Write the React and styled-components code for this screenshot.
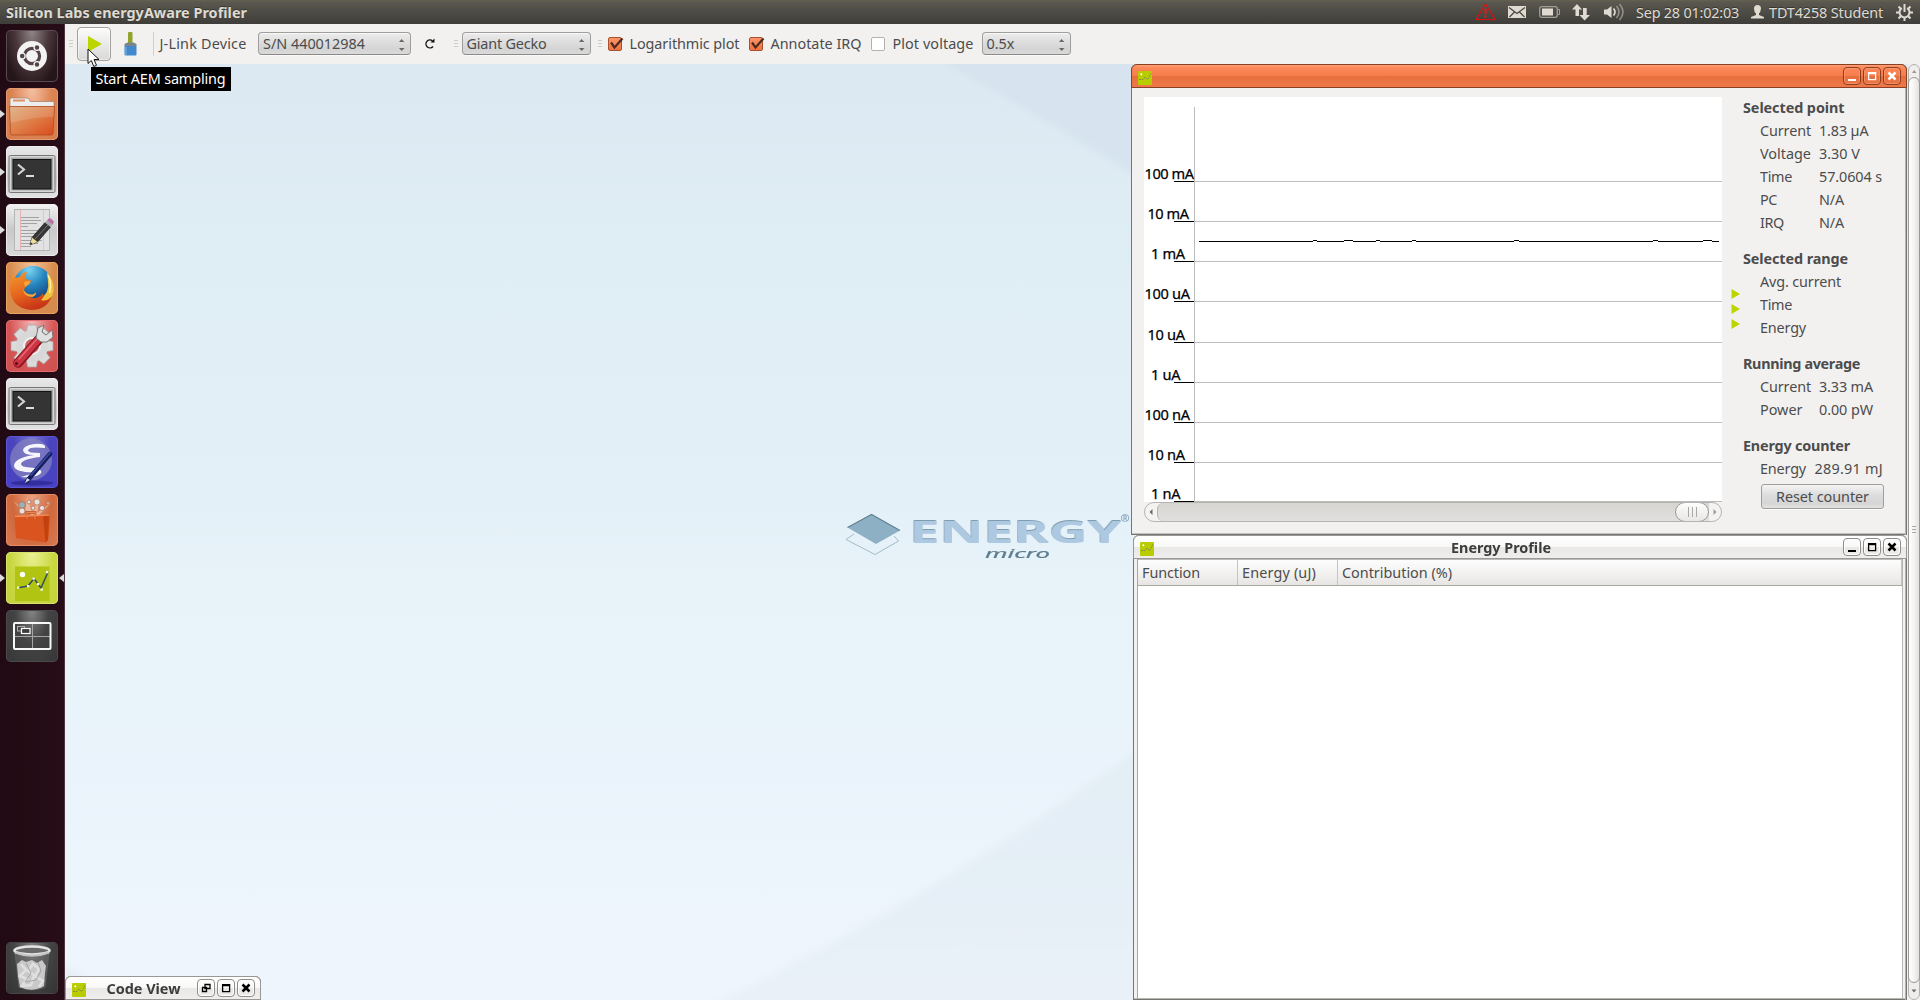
import React, { useLayoutEffect, useRef, useState } from "react";
import styled, { createGlobalStyle, css } from "styled-components";

const Global = createGlobalStyle`
  * { box-sizing: border-box; }
  html, body { margin: 0; padding: 0; overflow: hidden; }
  body { font-family: "Noto Sans", "Open Sans", sans-serif; font-size: 14.4px; color: #4c4c4c; }
  svg { display: block; flex: none; }
`;

/* ---------- text ---------- */

const TextSpan = styled.span`
  display: block;
  flex: none;
  white-space: pre;
  width: ${(p) => p.$w}px;
  margin-left: ${(p) => p.$gap || 0}px;
  line-height: 23px;
  font-weight: ${(p) => (p.$bold ? 700 : 400)};
  color: ${(p) => p.$color || "inherit"};
`;

function Text({ w, children, ...rest }) {
  const ref = useRef(null);
  const [spacing, setSpacing] = useState(0);
  useLayoutEffect(() => {
    const range = document.createRange();
    range.selectNodeContents(ref.current);
    const natural = range.getBoundingClientRect().width;
    setSpacing((w - natural) / children.length);
  }, []);
  return (
    <TextSpan $w={w} {...rest}>
      <span ref={ref} style={{ letterSpacing: spacing }}>{children}</span>
    </TextSpan>
  );
}

/* ---------- shell ---------- */

const Screen = styled.div`
  width: 1920px;
  height: 1000px;
  display: flex;
  flex-direction: column;
  overflow: hidden;
  background: #f2f1f0;
`;
const TopBar = styled.header`
  height: 24px;
  flex: none;
  display: flex;
  align-items: center;
  padding-left: 6px;
  color: #dfdbd2;
  background: linear-gradient(#656250 0, #5a584f 2px, #3e3d39 100%);
  text-shadow: 0 -1px 0 rgba(0, 0, 0, 0.35);
`;
const Indicators = styled.div`
  display: flex;
  align-items: center;
  height: 24px;
  margin-left: auto;
  padding-right: 7px;
`;
const Slot = styled.div`
  margin-left: ${(p) => p.$gap || 0}px;
  flex: none;
`;
const Main = styled.div`
  flex: 1;
  min-height: 0;
  display: flex;
`;
const Launcher = styled.nav`
  width: 65px;
  flex: none;
  display: flex;
  flex-direction: column;
  gap: 6px;
  padding: 6px 0 6px 6px;
  background: linear-gradient(90deg, #210a13, #270d17);
  border-right: 1px solid #4b3641;
`;
const LaunchItem = styled.div`
  position: relative;
  width: 52px;
  height: 52px;
  flex: none;
  margin-top: ${(p) => (p.$last ? "auto" : 0)};
  ${(p) => p.$running && css`
    &::before {
      content: "";
      position: absolute;
      left: -6px;
      top: 22px;
      border: 4px solid transparent;
      border-left: 5px solid #dcdcdc;
      border-right: 0;
    }
  `}
  ${(p) => p.$active && css`
    &::after {
      content: "";
      position: absolute;
      left: 53px;
      top: 22px;
      border: 4px solid transparent;
      border-right: 5px solid #dcdcdc;
      border-left: 0;
    }
  `}
`;
const Tile = styled.div`
  width: 52px;
  height: 52px;
  border-radius: 5px;
  overflow: hidden;
  background: ${(p) => p.$bg};
  box-shadow: inset 0 0 0 1px ${(p) => p.$edge || "rgba(255,255,255,0.3)"};
`;

/* ---------- toolbar ---------- */

const Content = styled.div`
  flex: 1;
  min-width: 0;
  display: flex;
  flex-direction: column;
`;
const Toolbar = styled.div`
  position: relative;
  z-index: 2;
  height: 40px;
  flex: none;
  display: flex;
  align-items: center;
  padding: 0 0 1px 4px;
  background: #f2f1f0;
`;
const Grip = styled.div`
  width: 4px;
  height: 8px;
  flex: none;
  margin-left: ${(p) => p.$gap || 0}px;
  background: repeating-linear-gradient(#cfcdca 0 1px, transparent 1px 3px);
`;
const PlayButton = styled.button`
  width: 34px;
  height: 34px;
  flex: none;
  margin: 0 0 0 4px;
  padding: 0;
  border: 1px solid #a2a19f;
  border-radius: 4px;
  background: linear-gradient(#fbfbfb, #d8d8d7);
  box-shadow: inset 0 0 0 1px rgba(255, 255, 255, 0.5);
`;
const Separator = styled.div`
  width: 1px;
  height: 24px;
  margin-left: 16px;
  background: #d2d0cd;
`;
const Select = styled.div`
  width: ${(p) => p.$w}px;
  height: 23px;
  flex: none;
  margin-left: ${(p) => p.$gap}px;
  padding: 0 4px 0 4px;
  display: flex;
  align-items: center;
  justify-content: space-between;
  border: 1px solid #a09e9b;
  border-bottom-color: #8c8a87;
  border-radius: 4px;
  background: linear-gradient(#ececec, #d4d4d4 75%, #dadada);
  box-shadow: inset 0 1px 0 #f8f8f8, 0 1px 0 #fafafa;
`;
const Check = styled.div`
  width: 14px;
  height: 14px;
  flex: none;
  position: relative;
  margin-left: ${(p) => p.$gap}px;
  border-radius: 2px;
  border: 1px solid ${(p) => (p.$on ? "#a9502c" : "#b4b2af")};
  background: ${(p) => (p.$on ? "linear-gradient(#fb9468, #ee7241)" : "#fff")};
  svg { position: absolute; left: -1px; top: -1px; overflow: visible; }
`;
const Tooltip = styled.div`
  position: absolute;
  left: 26px;
  top: 43px;
  width: 140px;
  height: 24px;
  padding-left: 4.5px;
  background: #000;
  color: #fff;
`;
const Pointer = styled.div`
  position: absolute;
  left: 22px;
  top: 24px;
`;

/* ---------- MDI area ---------- */

const Area = styled.div`
  flex: 1;
  min-height: 0;
  display: flex;
`;
const Workspace = styled.div`
  position: relative;
  flex: 1;
  overflow: hidden;
  background: linear-gradient(#dde9f2 0, #dfedf5 20%, #e3eff7 42%, #e7f3f9 55%, #eaf3fb 75%, #eef5fd 100%);
`;
const Backdrop = styled.svg`
  position: absolute;
  left: 0;
  top: 0;
`;
const Win = styled.section`
  position: absolute;
  left: ${(p) => p.$x}px;
  top: ${(p) => p.$y}px;
  width: ${(p) => p.$w}px;
  height: ${(p) => p.$h}px;
  display: flex;
  flex-direction: column;
  background: #f2f1f0;
  border-radius: 6px 6px 0 0;
  box-shadow: inset 1px 0 #777572, inset -1px 0 #777572, inset -2px 0 #b5b3b0, inset 0 -1px #777572, inset 0 -2px #c4c2bf;
`;
const TitleBar = styled.div`
  height: ${(p) => p.$h}px;
  flex: none;
  display: flex;
  align-items: center;
  justify-content: space-between;
  padding: 0 5px 0 6px;
  border-radius: 6px 6px 0 0;
  border: 1px solid ${(p) => (p.$active ? "#8a4023" : "#9a9896")};
  color: #3c3c3c;
  background: ${(p) => p.$active
    ? "linear-gradient(#ff9e76 0, #fd8757 3px, #f77d4c 48%, #e66f3e 52%, #f07848 100%)"
    : "linear-gradient(#ffffff 0, #f8f8f7 48%, #e9e8e7 52%, #efeeed 100%)"};
`;
const TitleIcon = styled.div`
  flex: none;
  margin-top: 4px;
`;
const WinButtons = styled.div`
  display: flex;
  gap: 2px;
`;
const WinButton = styled.div`
  width: 18px;
  height: 18px;
  border-radius: 4px;
  border: 1px solid ${(p) => (p.$active ? "#8a4023" : "#8f8d8b")};
  box-shadow: inset 0 0 0 1px ${(p) => (p.$active ? "rgba(255,170,130,.45)" : "#fff")};
  color: ${(p) => (p.$active ? "#fff" : "#000")};
`;
const Body = styled.div`
  flex: 1;
  display: flex;
  padding: 8px 0 0 13px;
`;
const ChartColumn = styled.div`
  width: 578px;
  flex: none;
  padding-top: 1px;
`;
const HScroll = styled.div`
  display: flex;
  width: 578px;
  height: 20px;
  border-radius: 10px;
  border: 1px solid #b5b3b0;
  background: #f4f3f2;
  overflow: hidden;
`;
const ScrollEnd = styled.div`
  width: 12px;
  flex: none;
  display: flex;
  align-items: center;
  justify-content: center;
`;
const HTrack = styled.div`
  flex: 1;
  display: flex;
  justify-content: flex-end;
  border-left: 1px solid #b5b3b0;
  border-radius: 6px 0 0 6px;
  background: linear-gradient(#d6d5d2, #e1e0de);
`;
const HThumb = styled.div`
  width: 34px;
  height: 20px;
  margin-top: -1px;
  display: flex;
  align-items: center;
  justify-content: center;
  border: 1px solid #9b9996;
  border-radius: 10px;
  background: linear-gradient(#fdfdfd, #e8e7e6);
`;
const Ribs = styled.div`
  width: 9px;
  height: 10px;
  background: repeating-linear-gradient(90deg, #aaa8a5 0 1px, transparent 1px 4px);
`;
const Markers = styled.div`
  width: 21px;
  flex: none;
  display: flex;
  flex-direction: column;
  gap: 5px;
  padding: 193px 0 0 9px;
`;
const Readout = styled.div`
  display: flex;
  flex-direction: column;
  gap: 13px;
`;
const Group = styled.div`
  display: flex;
  flex-direction: column;
`;
const Row = styled.div`
  display: flex;
  height: 23px;
  padding-left: 17px;
`;
const ResetButton = styled.button`
  width: 123px;
  height: 25px;
  margin: 4px 0 0 18px;
  padding: 0 0 1px 14px;
  display: flex;
  align-items: center;
  font: inherit;
  color: #4c4c4c;
  border: 1px solid #a09e9b;
  border-radius: 3px;
  background: linear-gradient(#f4f4f4, #dcdcdc 45%, #d6d6d6 80%, #e2e2e2);
  box-shadow: 0 1px 0 #fbfbfb;
`;
const TableFrame = styled.div`
  flex: 1;
  margin: 0 4px 1px 4px;
  border-left: 1px solid #a9a7a3;
  border-right: 1px solid #b8b6b2;
  border-bottom: 1px solid #b8b6b2;
  background: #fff;
`;
const HeaderRow = styled.div`
  display: flex;
  height: 27px;
  align-items: center;
  border-top: 1px solid #bdbbb7;
  border-bottom: 1px solid #aaa8a2;
  background: linear-gradient(#fdfdfd, #f1f0ef 60%, #e6e5e4);
`;
const HeaderCell = styled.div`
  width: ${(p) => p.$w}px;
  height: 25px;
  padding-left: 4px;
  display: flex;
  align-items: center;
  border-right: 1px solid #c6c4c1;
`;
const VScroll = styled.div`
  width: 12px;
  flex: none;
  display: flex;
  flex-direction: column;
  border: 1px solid #b3b1ae;
  border-radius: 7px;
  background: #efeeed;
`;
const VEnd = styled.div`
  height: ${(p) => p.$h}px;
  flex: none;
  display: flex;
  align-items: center;
  justify-content: center;
`;
const VThumb = styled.div`
  flex: 1;
  width: 12px;
  margin-left: -1px;
  display: flex;
  align-items: center;
  justify-content: center;
  border: 1px solid #9b9996;
  border-radius: 7px;
  background: linear-gradient(90deg, #fff, #f5f4f3 50%, #e2e1e0);
`;
const VRibs = styled.div`
  width: 4px;
  height: 8px;
  background: repeating-linear-gradient(#aaa8a5 0 1px, transparent 1px 3px);
`;

/* ---------- drawings ---------- */

const Arrow = ({ d, w = 6, h = 4, fill = "#6b6967" }) => (
  <svg width={w} height={h} viewBox={`0 0 ${w} ${h}`}><path d={d} fill={fill} /></svg>
);
const SpinArrows = () => (
  <svg width="9" height="15" viewBox="0 0 9 15">
    <path d="M2 6 4.5 3 7.5 6ZM2 12 7.5 12 4.7 15Z" fill="#6b6967" />
  </svg>
);
const CheckMark = () => (
  <svg width="16" height="14" viewBox="0 0 16 14">
    <path d="M3 5.5 6.5 10.5 14.5 1.5" fill="none" stroke="#4d2a1d" strokeWidth="2.2" />
  </svg>
);
const AppGlyph = () => (
  <TitleIcon>
    <svg width="14" height="14" viewBox="0 0 14 14">
      <rect width="14" height="14" rx="1" fill="#b9cc00" />
      <circle cx="3.3" cy="3.2" r="1" fill="#fff" />
      <path d="M1 8.500H5L7 6 9.500 8.500 10.500 7 13 2.500" fill="none" stroke="#7b8a4c" strokeWidth="1" strokeDasharray="1.800 .9" />
    </svg>
  </TitleIcon>
);
const glyphs = {
  min: <path d="M4 11h8v2H4z" fill="currentColor" />,
  max: <path d="M4.600 4.600h7v7h-7z M4 5.500h8" fill="none" stroke="currentColor" strokeWidth="1.3" />,
  close: <path d="M4.500 4.500 11.500 11.500M11.500 4.500 4.500 11.500" fill="none" stroke="currentColor" strokeWidth="2.500" />,
  restore: <path d="M7 4.5h5v4h-5zM4.5 7.5h4v4h-4z" fill="none" stroke="currentColor" strokeWidth="1.3" />,
};
const Buttons = ({ kinds, active }) => (
  <WinButtons>
    {kinds.map((k) => (
      <WinButton key={k} $active={active}>
        <svg width="16" height="16" viewBox="0 0 16 16">{glyphs[k]}</svg>
      </WinButton>
    ))}
  </WinButtons>
);

const Icon52 = ({ children }) => <svg width="52" height="52" viewBox="0 0 52 52">{children}</svg>;

const DashIcon = () => (
  <Icon52>
    <circle cx="26" cy="26" r="15" fill="#f4f3f3" />
    <circle cx="26" cy="26" r="7.6" fill="none" stroke="#544448" strokeWidth="3.2" />
    <g fill="#544448" stroke="#f4f3f3" strokeWidth="1.3">
      <circle cx="16.2" cy="26" r="2.9" />
      <circle cx="31" cy="17.4" r="2.9" />
      <circle cx="31" cy="34.6" r="2.9" />
    </g>
  </Icon52>
);
const FolderIcon = () => (
  <Icon52>
    <defs>
      <linearGradient id="fold" x1="0" y1="0" x2="1" y2="1">
        <stop offset="0" stopColor="#d9a878" /><stop offset=".5" stopColor="#df7e48" /><stop offset="1" stopColor="#d94a1c" />
      </linearGradient>
    </defs>
    <path d="M4 18V11.5q0-1.5 1.500-1.500H21q2 0 2.500 2l.8 1.500H47q1 0 1 1V19H4Z" fill="#ededed" stroke="#a9836e" strokeWidth=".8" />
    <path d="M7 12.500h12" stroke="#e09068" strokeWidth="2" />
    <path d="M3.500 18.500h45L47 45.500q0 1.500-1.500 1.500H6q-1.500 0-1.500-1.500Z" fill="url(#fold)" stroke="#b24a20" strokeWidth=".8" />
    <path d="M4 19h44l-.5 10Q30 28 4.500 35Z" fill="#fff" opacity=".14" />
  </Icon52>
);
const TerminalIcon = () => (
  <Icon52>
    <rect x="3" y="9.500" width="46" height="37" rx="1.500" fill="#d6d6d6" stroke="#777" />
    <rect x="5" y="11.500" width="42" height="33" fill="#a8a8a8" />
    <rect x="7" y="13.500" width="38" height="29.500" fill="#343434" stroke="#141414" />
    <path d="M12 18.500 18 23.500 12 28.500" fill="none" stroke="#d2d2d2" strokeWidth="2.200" />
    <path d="M20 30h8" stroke="#dedede" strokeWidth="2" />
  </Icon52>
);
const EditorIcon = () => (
  <Icon52>
    <rect x="8.500" y="5.500" width="35" height="41" fill="#e2e2e2" stroke="#b5b5b5" />
    <path d="M14.500 6v40" stroke="#e4b4b4" /><path d="M37.500 6v40" stroke="#c4cee2" />
    <path d="M15 13.500h18M15 16.500h20M15 19.500h16M15 22.500h7M15 26.500h19M15 29.500h18M15 32.500h13M15 36.500h21M15 39.500h17M15 42.500h10" stroke="#a2a2a2" strokeWidth="1" />
    <path d="M24 41 26 33.500 39 18.500 44.500 23 31.500 38Z" fill="#363636" stroke="#1e1e1e" strokeWidth=".7" />
    <path d="M24 41 26 33.500 31.500 38Z" fill="#e9dd9c" /><path d="M24 41 24.700 38.300 26.500 39.800Z" fill="#222" />
    <path d="M29 35 42 21" stroke="#777" strokeWidth="1" />
    <path d="M39 18.500 41 16.200 46.500 20.700 44.500 23Z" fill="#aaa" />
    <path d="M41 16.200 43 14.200q3 0 5 3.800L46.500 20.700Z" fill="#bc6fab" />
  </Icon52>
);
const FirefoxIcon = () => (
  <Icon52>
    <defs>
      <radialGradient id="globe" cx=".4" cy=".1" r=".9">
        <stop offset="0" stopColor="#7cd4f2" /><stop offset=".45" stopColor="#2586bf" /><stop offset="1" stopColor="#15306d" />
      </radialGradient>
      <linearGradient id="fox" x1="0" y1="0" x2=".4" y2="1">
        <stop offset="0" stopColor="#f49a2c" /><stop offset=".6" stopColor="#e4641d" /><stop offset="1" stopColor="#c93718" />
      </linearGradient>
    </defs>
    <circle cx="27" cy="23.500" r="19.500" fill="url(#globe)" />
    <path d="M41 10Q48.500 18 47.500 29Q46 40 36 45L33 38Q44 31 42 20Z" fill="#f2c23c" />
    <path d="M42 13Q46 20 43.500 31" fill="none" stroke="#fff2b0" strokeWidth="1.500" />
    <path d="M7 12Q4 18 4 27Q5 46 25 48Q41 48 46 34Q41 40 35 38Q39 35 37 31Q33 37 27 36Q19 34 18 28Q19 24 24 22L25 18Q22 19 20 17Q19 13 21 10Q16 10 14 15L9 16Z" fill="url(#fox)" />
    <path d="M17 27Q20 33 27 32.500L29.500 30.500Q31 33 26.500 35Q18 35 17 27ZM18 20l6-1-1 3-4 3Z" fill="#f6a83c" />
  </Icon52>
);
const teeth = Array.from({ length: 8 }, (_, i) => i * 45);
const SettingsIcon = () => (
  <Icon52>
    <g fill="#dcdcdc" stroke="#a7a7a7" strokeWidth=".8">
      {teeth.map((a) => (
        <path key={a} d="M20.500 12 21.500 5h9l1 7Z" transform={`rotate(${a} 26 26)`} />
      ))}
    </g>
    <circle cx="26" cy="26" r="16" fill="#d8d8d8" />
    <circle cx="26" cy="26" r="8" fill="#c86464" stroke="#f1f1f1" strokeWidth="2" />
    <path d="M12 43 35 17" stroke="#8e1520" strokeWidth="9.500" strokeLinecap="round" />
    <path d="M11.500 43 34.500 17" stroke="#cb3442" strokeWidth="7" strokeLinecap="round" />
    <path d="M13 39 31 19" stroke="#e46a72" strokeWidth="1.500" strokeLinecap="round" />
    <circle cx="10.500" cy="43.500" r="1.500" fill="#5e0c14" />
    <path d="M30 18 32 8 38 5 36 12 40 15 46 10 47 17 41 22 35 22Z" fill="#dfe1e1" stroke="#787878" strokeWidth="1" />
  </Icon52>
);
const EmacsIcon = () => (
  <Icon52>
    <circle cx="25" cy="23.500" r="21" fill="#8280c0" opacity=".75" />
    <ellipse cx="26" cy="47" rx="21" ry="2.500" fill="#2a2590" opacity=".7" />
    <path d="M39 10Q37 7 28 8Q17 9.500 17 14.500Q18 19 28 19Q8 22 8 30Q9 36 27 36.500Q24 38.500 15 41Q34 42 35.500 36Q35 32 24 31.500Q15 31 15 28Q16 23 34 21V17Q22 17 22 14.500Q22.500 10 39 12Z" fill="#f5f5fb" />
    <path d="M21 45 44 18" stroke="#161d5b" strokeWidth="4.500" strokeLinecap="round" />
    <path d="M25 39 44 17" stroke="#3949a0" strokeWidth="1.800" strokeLinecap="round" />
    <path d="M19 47 21 42 24 44Z" fill="#d8d8e8" />
  </Icon52>
);
const StoreIcon = () => (
  <Icon52>
    <path d="M26 21 7 7 19 19 21 3 26 18 34 3 31 19 46 8 32 22Z" fill="#f7d4c0" opacity=".6" />
    <g fill="#e7e2df" stroke="#ac7358" strokeWidth=".8">
      <circle cx="16" cy="11" r="3.300" fill="#9bb0bb" /><circle cx="23" cy="8" r="2" /><circle cx="31" cy="8" r="3.200" />
      <circle cx="16" cy="17" r="3" /><circle cx="36" cy="14" r="2.600" /><circle cx="42" cy="9" r="1.300" /><circle cx="27" cy="14" r="2" />
    </g>
    <path d="M8.500 22.500 43 20.500 44 24 42 46 39.500 48.500 10 44Z" fill="#d9541e" />
    <path d="M37 21 43 20.500 42 46 39.500 48.500Z" fill="#c1410f" />
    <path d="M21 25v-6.500h8V25" fill="none" stroke="#b8481a" strokeWidth="2.600" />
    <path d="M21 25v-6.500h8V25" fill="none" stroke="#ee8650" strokeWidth="1.200" />
    <path d="M9 22.500 43 21" stroke="#f18b57" strokeWidth="1.300" />
  </Icon52>
);
const ProfilerIcon = () => (
  <Icon52>
    <rect x="9" y="14.500" width="34.500" height="34.500" fill="#b1c411" />
    <circle cx="16.500" cy="22.500" r="2.700" fill="#fafaf0" />
    <path d="M11 36 22 34 28 26.500 35 36 42 20" fill="none" stroke="#34505c" strokeWidth="1.600" />
    {[[12, 35.500], [22, 34], [27.500, 26.500], [32, 32], [35.500, 37.500], [41, 20]].map(([x, y]) => (
      <rect key={x} x={x - 1} y={y - 1} width="2.300" height="2.300" fill="#f6f6f6" />
    ))}
  </Icon52>
);
const SwitcherIcon = () => (
  <Icon52>
    <path d="M26.500 13v25M8 26.500h36" stroke="#a5a5a5" />
    <rect x="8" y="13" width="36.500" height="26" rx="1" fill="none" stroke="#f7f7f7" strokeWidth="2" />
    <rect x="11.500" y="16.500" width="7" height="4.500" fill="none" stroke="#b0b0b0" />
    <rect x="15.500" y="18.500" width="8.500" height="5" fill="#3c3c3c" stroke="#fff" strokeWidth="1.200" />
  </Icon52>
);
const TrashIcon = () => (
  <Icon52>
    <path d="M9 10 13 45q13 6 26 0L43 10Z" fill="#8d8d8d" opacity=".28" stroke="#c6c6c6" strokeWidth=".8" />
    <path d="M11 22 16 18 20 20 26 18 31 21 36 18 40 24 39 31 38 44Q26 51 14 45L12 34Z" fill="#c9c9c9" />
    <path d="M15 22 20 28 14 34 21 37 16 44 25 43 28 33 22 29 27 22 33 27 29 34 37 39 33 45" fill="none" stroke="#eee" strokeWidth="2.600" opacity=".6" />
    <path d="M20 21 25 31 19 40 30 38 35 29 32 20" fill="none" stroke="#a5a5a5" strokeWidth="1" />
    <ellipse cx="26" cy="8.500" rx="17.500" ry="4" fill="#6a6a6a" stroke="#e4e4e4" strokeWidth="2.600" />
    <path d="M9 10.500Q26 17 43 10.500" fill="none" stroke="#c4c4c4" strokeWidth="2" />
  </Icon52>
);

const launchers = [
  { icon: DashIcon, bg: "radial-gradient(ellipse at 50% 0%, #91878a 0%, #4a373c 45%, #25161a 80%)", edge: "#584a4d" },
  { icon: FolderIcon, bg: "radial-gradient(ellipse at 50% 0%, #f5c2a4 0%, #dc8352 55%, #d67c4c 100%)", edge: "#e49a72", running: true },
  { icon: TerminalIcon, bg: "linear-gradient(#e9e9e9, #c8c8c8 60%, #e3e3e3)", edge: "#ececec", running: true },
  { icon: EditorIcon, bg: "linear-gradient(#f3f3f3, #c9c9c9 50%, #d9d9d9)", edge: "#ececec", running: true },
  { icon: FirefoxIcon, bg: "radial-gradient(ellipse at 50% 0%, #f2c29c 0%, #d98c4c 60%, #d18a4e 100%)", edge: "#eba362" },
  { icon: SettingsIcon, bg: "radial-gradient(ellipse at 50% 0%, #f4b5b5 0%, #d65656 60%, #cd4f4f 100%)", edge: "#e36a6e" },
  { icon: TerminalIcon, bg: "linear-gradient(#e9e9e9, #c8c8c8 60%, #e3e3e3)", edge: "#ececec" },
  { icon: EmacsIcon, bg: "radial-gradient(ellipse at 50% 0%, #7b79d4 0%, #4a44bd 50%, #4842c4 100%)", edge: "#5b56d4" },
  { icon: StoreIcon, bg: "radial-gradient(ellipse at 50% 0%, #eba283 0%, #d0683d 55%, #d77a52 100%)", edge: "#e28b66" },
  { icon: ProfilerIcon, bg: "radial-gradient(ellipse at 50% 0%, #edf296 0%, #c8d63f 60%, #c4d33c 100%)", edge: "#d7e368", running: true, active: true },
  { icon: SwitcherIcon, bg: "radial-gradient(ellipse at 50% 0%, #858585 0%, #444 45%, #363636 100%)", edge: "#4a4a4a" },
  { icon: TrashIcon, bg: "radial-gradient(ellipse at 50% 0%, #808080 0%, #444 50%, #333 100%)", edge: "#444", last: true },
];

/* ---------- chart ---------- */

const scale = [
  ["100 mA", 84, 0.5, 49.5], ["10 mA", 124, 3.5, 41.5], ["1 mA", 164, 7, 34], ["100 uA", 204, 0.5, 45.5], ["10 uA", 245, 3.5, 37.5],
  ["1 uA", 285, 7, 29.5], ["100 nA", 325, 0.5, 45.5], ["10 nA", 365, 3.5, 37.5], ["1 nA", 404, 7, 29.5],
];
const bumps = [[169, 173], [200, 209], [232, 236], [268, 272], [370, 375], [509, 514], [559, 568]];
const trace = () => {
  let d = "M55 144.5";
  bumps.forEach(([a, b]) => { d += `H${a}M${a} 143.5H${b}M${b} 144.5`; });
  return d + "H575";
};
const Plot = styled.svg`
  background: #fff;
  font-size: 14.6px;
`;
const Chart = () => (
  <Plot width="578" height="405" viewBox="0 0 578 405">
    <path d="M50.500 10V405" stroke="#bcbcbc" />
    {scale.map(([label, y, x, w]) => (
      <g key={label}>
        <path d={`M51 ${y + 0.5}H578`} stroke="#bcbcbc" />
        <path d={`M30 ${y + 0.5}H50`} stroke="#000" />
        <text x={x} y={y - 2} textLength={w} fill="#000" stroke="#000" strokeWidth=".25">{label}</text>
      </g>
    ))}
    <path d={trace()} stroke="#000" fill="none" />
  </Plot>
);

const Scenery = () => (
  <Backdrop width="1843" height="936" viewBox="0 0 1843 936">
    <defs>
      <linearGradient id="low" x1="0" y1="0" x2="0" y2="1">
        <stop offset="0" stopColor="#dfecf2" /><stop offset=".5" stopColor="#e4eef5" /><stop offset="1" stopColor="#e9f1f9" />
      </linearGradient>
      <filter id="soft"><feGaussianBlur stdDeviation="3" /></filter>
      <filter id="edge" x="-5%" y="-20%" width="110%" height="140%">
        <feDropShadow dx="-.6" dy="-.9" stdDeviation=".3" floodColor="#66889f" floodOpacity=".9" />
      </filter>
    </defs>
    <g filter="url(#soft)">
      <path d="M872 -4Q965 46 1080 118L1300 240V-10Z" fill="#d4e2ed" opacity=".75" />
      <path d="M645 942Q865 836 1070 688L1300 540V960Z" fill="url(#low)" opacity=".9" />
      <path d="M-5 900Q20 908 40 940H-5Z" fill="#e6eff6" />
    </g>
    <g transform="translate(-65 -64)">
      <path d="M846 539.500 875 554.500 898.500 541 894 536M846 539.500 854 534" fill="none" stroke="#a3bac8" strokeWidth="1" />
      <path d="M847.500 527.500 871.500 514.500 900 530.500 876 544Z" fill="#8eb0c5" />
      <path d="M847.500 527.500 871.500 514.500 900 530.500" fill="none" stroke="#5f8294" strokeWidth="1.200" />
      <text x="909.500" y="543.300" fontWeight="700" fontSize="31" textLength="212" lengthAdjust="spacingAndGlyphs" fill="#adc8e1" filter="url(#edge)">ENERGY</text>
      <text x="985" y="557.900" fontSize="12.600" fontStyle="italic" textLength="65" lengthAdjust="spacingAndGlyphs" fill="#5d7d90" stroke="#5d7d90" strokeWidth=".2">micro</text>
      <text x="1120.500" y="522" fontSize="11" fontWeight="700" fill="#7f9fb9">®</text>
    </g>
  </Backdrop>
);

/* ---------- readings ---------- */

const groups = [
  { title: ["Selected point", 101.5], rows: [
    ["Current", 51, "1.83 µA", 49.5, 8], ["Voltage", 51, "3.30 V", 41, 8], ["Time", 32, "57.0604 s", 63, 27],
    ["PC", 17, "N/A", 25, 42], ["IRQ", 24, "N/A", 25, 35]] },
  { title: ["Selected range", 105], rows: [["Avg. current", 81], ["Time", 32], ["Energy", 46]] },
  { title: ["Running average", 117], rows: [["Current", 51, "3.33 mA", 54, 8], ["Power", 42.5, "0.00 pW", 54, 16.5]] },
  { title: ["Energy counter", 107], rows: [["Energy", 46, "289.91 mJ", 68.5, 8.5]], reset: true },
];

export default function App() {
  return (
    <Screen>
      <Global />
      <TopBar>
        <Text w={241} $bold>Silicon Labs energyAware Profiler</Text>
        <Indicators>
          <svg width="21" height="18" viewBox="0 0 21 18">
            <path d="M10.500 1 20 16.500H1Z" fill="none" stroke="#e01010" strokeWidth="1.200" />
            <path d="M10.500 6v5M10.500 12.500v2" stroke="#f01414" strokeWidth="2" />
          </svg>
          <Slot $gap={12}>
            <svg width="18" height="12" viewBox="0 0 18 12">
              <rect width="18" height="12" fill="#dfdbd2" />
              <path d="M1 1.500 9 7.500 17 1.500M1.500 11 6.500 6M16.500 11 11.500 6" fill="none" stroke="#47463f" strokeWidth="1.200" />
            </svg>
          </Slot>
          <Slot $gap={13}>
            <svg width="21" height="12" viewBox="0 0 21 12">
              <rect x=".7" y=".7" width="17.600" height="10.600" rx="2" fill="none" stroke="#a19e95" strokeWidth="1.300" />
              <rect x="3" y="2.500" width="11" height="7" fill="#dfdbd2" /><path d="M19 3.500h1.500v5H19" fill="none" stroke="#a19e95" />
            </svg>
          </Slot>
          <Slot $gap={12}>
            <svg width="18" height="18" viewBox="0 0 18 18">
              <path d="M5 1 0 6.500H3.500V13H7V6.500H10ZM12.500 17.500 18 12H14.700V5H11V12H7.500Z" fill="#dfdbd2" />
            </svg>
          </Slot>
          <Slot $gap={14}>
            <svg width="20" height="18" viewBox="0 0 20 18">
              <path d="M0 6.500H3L7.500 3V15L3 11.500H0Z" fill="#dfdbd2" />
              <path d="M9.500 5.500q3 3.500 0 7" fill="none" stroke="#dfdbd2" strokeWidth="1.700" />
              <path d="M12.500 3q5 6 0 12M15.500 1q7 8 0 16" fill="none" stroke="#918f86" strokeWidth="1.600" />
            </svg>
          </Slot>
          <Text w={103} $gap={12}>Sep 28 01:02:03</Text>
          <Slot $gap={12}>
            <svg width="13" height="14" viewBox="0 0 13 14">
              <path d="M6.500 0Q10 0 10 3.500Q9.500 7.500 8 8.500V10L13 12V13.500H0V12L5 10V8.500Q3 7 3 3.500Q3 0 6.500 0Z" fill="#dfdbd2" />
            </svg>
          </Slot>
          <Text w={114} $gap={5}>TDT4258 Student</Text>
          <Slot $gap={13}>
            <svg width="17" height="17" viewBox="0 0 17 17" fill="none" stroke="#dfdbd2">
              <path d="M5.800 4.200A5 5 0 1 0 11.200 4.200" strokeWidth="2" />
              <path d="M8.500 0V8" strokeWidth="2" />
              <path d="M8.500 13.500V17M0 8.500H3.500M13.500 8.500H17M2.500 2.500 5 5M14.500 2.500 12 5M2.500 14.500 5 12M14.500 14.500 12 12" strokeWidth="2" />
            </svg>
          </Slot>
        </Indicators>
      </TopBar>
      <Main>
        <Launcher>
          {launchers.map(({ icon: Icon, bg, edge, running, active, last }, i) => (
            <LaunchItem key={i} $running={running} $active={active} $last={last}>
              <Tile $bg={bg} $edge={edge}><Icon /></Tile>
            </LaunchItem>
          ))}
        </Launcher>
        <Content>
          <Toolbar>
            <Grip />
            <PlayButton>
              <svg width="32" height="32" viewBox="0 0 32 32"><path d="M10 8 24 16 10 24Z" fill="#bcd400" /></svg>
            </PlayButton>
            <Slot $gap={12.5}>
              <svg width="13" height="24" viewBox="0 0 13 24">
                <rect x="4" y="0" width="4.500" height="12" rx="1" fill="#93a32c" />
                <path d="M.5 12 3.500 10.500H9.500L12.500 12V14.500H.5Z" fill="#7d8488" />
                <rect x=".5" y="14" width="12" height="9.500" rx="1" fill="#4189cc" />
                <path d="M2 15v8" stroke="#80b5e4" />
              </svg>
            </Slot>
            <Separator />
            <Text w={87} $gap={6}>J-Link Device</Text>
            <Select $w={153} $gap={11.5}><Text w={102}>S/N 440012984</Text><SpinArrows /></Select>
            <Slot $gap={13}>
              <svg width="12" height="12" viewBox="0 0 12 12">
                <path d="M9 8.500A4 4 0 1 1 8.500 2.800" fill="none" stroke="#111" strokeWidth="1.400" />
                <path d="M10.500 .5V4.500H6.500Z" fill="#111" />
              </svg>
            </Slot>
            <Grip $gap={17.5} />
            <Select $w={129} $gap={4}><Text w={80}>Giant Gecko</Text><SpinArrows /></Select>
            <Grip $gap={7} />
            <Check $on $gap={6}><CheckMark /></Check>
            <Text w={110} $gap={8}>Logarithmic plot</Text>
            <Check $on $gap={9}><CheckMark /></Check>
            <Text w={91} $gap={8}>Annotate IRQ</Text>
            <Check $gap={9} />
            <Text w={81} $gap={8}>Plot voltage</Text>
            <Select $w={89} $gap={8}><Text w={28}>0.5x</Text><SpinArrows /></Select>
            <Tooltip><Text w={130} $color="#fff">Start AEM sampling</Text></Tooltip>
            <Pointer>
              <svg width="14" height="20" viewBox="0 0 14 20">
                <path d="M1 1V15.500L4.300 12.500 6.800 18.500 9.500 17.300 7 11.500H12Z" fill="#fff" stroke="#111" />
              </svg>
            </Pointer>
          </Toolbar>
          <Area>
            <Workspace>
              <Scenery />
              <Win $x={1066} $y={0} $w={776} $h={471}>
                <TitleBar $active $h={24}><AppGlyph /><Buttons active kinds={["min", "max", "close"]} /></TitleBar>
                <Body>
                  <ChartColumn>
                    <Chart />
                    <HScroll>
                      <ScrollEnd><Arrow w={4} h={6} d="M3.500 0V6L.5 3Z" /></ScrollEnd>
                      <HTrack><HThumb><Ribs /></HThumb></HTrack>
                      <ScrollEnd><Arrow w={4} h={6} d="M.5 0V6L3.500 3Z" fill="#9b9996" /></ScrollEnd>
                    </HScroll>
                  </ChartColumn>
                  <Markers>
                    {[0, 1, 2].map((i) => <Arrow key={i} w={9} h={10} d="M.5 0V10L9 5Z" fill="#bcd400" />)}
                  </Markers>
                  <Readout>
                    {groups.map((g) => (
                      <Group key={g.title[0]}>
                        <Text w={g.title[1]} $bold>{g.title[0]}</Text>
                        {g.rows.map(([name, nw, value, vw, gap]) => (
                          <Row key={name}>
                            <Text w={nw}>{name}</Text>
                            {value && <Text w={vw} $gap={gap}>{value}</Text>}
                          </Row>
                        ))}
                        {g.reset && <ResetButton><Text w={93}>Reset counter</Text></ResetButton>}
                      </Group>
                    ))}
                  </Readout>
                </Body>
              </Win>
              <Win $x={1068} $y={471} $w={774} $h={465}>
                <TitleBar $h={24}>
                  <AppGlyph /><Text w={100} $bold $gap={5}>Energy Profile</Text><Buttons kinds={["min", "max", "close"]} />
                </TitleBar>
                <TableFrame>
                  <HeaderRow>
                    <HeaderCell $w={100}><Text w={58}>Function</Text></HeaderCell>
                    <HeaderCell $w={100}><Text w={74}>Energy (uJ)</Text></HeaderCell>
                    <HeaderCell $w={564}><Text w={110}>Contribution (%)</Text></HeaderCell>
                  </HeaderRow>
                </TableFrame>
              </Win>
              <Win $x={0} $y={912} $w={196} $h={24}>
                <TitleBar $h={24}>
                  <AppGlyph /><Text w={74} $bold $gap={4}>Code View</Text><Buttons kinds={["restore", "max", "close"]} />
                </TitleBar>
              </Win>
            </Workspace>
            <VScroll>
              <VEnd $h={12}><Arrow d="M1 4H5.500L3.200 1Z" fill="#9b9996" /></VEnd>
              <VThumb><VRibs /></VThumb>
              <VEnd $h={16}><Arrow d="M.5 .5H5.500L3 3.500Z" /></VEnd>
            </VScroll>
          </Area>
        </Content>
      </Main>
    </Screen>
  );
}
